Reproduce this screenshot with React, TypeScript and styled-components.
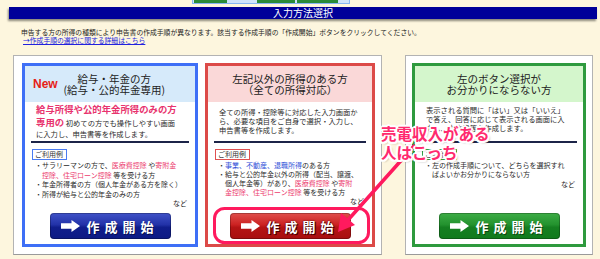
import React from "react";
import styled, { createGlobalStyle, css } from "styled-components";

const Global = createGlobalStyle`
  html, body { margin: 0; padding: 0; }
  body {
    background: #fdf6de;
    font-family: "Noto Sans CJK JP", "Noto Sans", sans-serif;
    color: #262626;
    width: 600px;
    height: 259px;
    overflow: hidden;
  }
`;

const Page = styled.div`
  position: relative;
  width: 600px;
  height: 259px;
`;

const TopStrip = styled.div`
  height: 5px;
`;

const TabBox = styled.div`
  margin-left: 192px;
  width: 154px;
  height: 3px;
  border: 1px solid #86b6f2;
  border-top: none;
  background: #cfe4fb;
  display: flex;
  gap: 2px;
  padding: 0 1px;
`;

const Tab = styled.div<{ $w: number }>`
  width: ${(p) => p.$w}px;
  background: #2a8a38;
`;

const HeaderBar = styled.div`
  margin: 2px 3px 0 9px;
  height: 12px;
  background: #000099;
  color: #fff;
  font-size: 10px;
  line-height: 12px;
  text-align: center;
  box-shadow: -1px 2px 2px rgba(0, 0, 0, 0.45);
`;

const Intro = styled.div`
  margin: 9px 0 0 21px;
  font-size: 6.8px;
  line-height: 8px;
  color: #222;
`;

const IntroLink = styled.a`
  display: block;
  margin-left: 2px;
  color: #2222dd;
  text-decoration: underline;
`;

const Panels = styled.div`
  display: flex;
  gap: 23px;
  margin: 11px 0 0 13px;
`;

const OuterPanel = styled.div<{ $pad: string }>`
  height: 200px;
  box-sizing: border-box;
  background: #fff;
  border: 1px solid #b3b3b3;
  border-bottom-color: #9a9a9a;
  padding: ${(p) => p.$pad};
  display: flex;
  gap: 7px;
`;

type Tone = "blue" | "red" | "green";

const tones = {
  blue: {
    border: "#3e6ff6",
    head: "#d6eafa",
    label: "#4a7cf2",
    btn: "linear-gradient(#4053c8 0%, #2232a8 45%, #101e8c 55%, #0d1a84 100%)",
  },
  red: {
    border: "#dc4a48",
    head: "#fad8d8",
    label: "#e05050",
    btn: "linear-gradient(#e0504c 0%, #cc2222 45%, #b51414 55%, #a80e10 100%)",
  },
  green: {
    border: "#2e9a3e",
    head: "#d4f6cc",
    label: "#33a046",
    btn: "linear-gradient(#3ead46 0%, #23922e 45%, #157f21 55%, #117a1d 100%)",
  },
};

const Card = styled.div<{ $tone: Tone; $w: number }>`
  width: ${(p) => p.$w}px;
  height: 184px;
  box-sizing: border-box;
  border: 3px solid ${(p) => tones[p.$tone].border};
  background: #fff;
  display: flex;
  flex-direction: column;
`;

const CardHead = styled.div<{ $tone: Tone }>`
  height: 36px;
  flex: none;
  background: ${(p) => tones[p.$tone].head};
  display: flex;
  align-items: center;
  padding: 0 8px;
`;

const NewMark = styled.span`
  font-family: "Liberation Sans", Arial, sans-serif;
  font-weight: bold;
  font-size: 12px;
  color: #e62117;
  flex: none;
`;

const Title = styled.div<{ $shift?: number }>`
  flex: 1;
  text-align: center;
  font-size: 10.5px;
  line-height: 11.5px;
  color: #222;
  padding-right: ${(p) => p.$shift ?? 0}px;
`;

const Desc = styled.div<{ $top: number; $lh: number }>`
  height: 38px;
  flex: none;
  box-sizing: border-box;
  padding: ${(p) => p.$top}px 8px 0 11px;
  font-size: 7.3px;
  line-height: ${(p) => p.$lh}px;
  white-space: nowrap;
  color: #2a2a2a;
`;

const PinkBold = styled.span`
  color: #e8336e;
  font-weight: bold;
  font-size: 9.4px;
`;

const Pink = styled.span`
  color: #ec3d6f;
`;

const BlueText = styled.span`
  color: #3150d8;
`;

const Divider = styled.div`
  height: 2px;
  margin: 1px 6px 0;
  background: #1c2448;
  flex: none;
`;

const UsageLabel = styled.div<{ $tone: Tone }>`
  align-self: flex-start;
  margin: 6px 0 0 7px;
  height: 11px;
  box-sizing: border-box;
  border: 1.5px solid ${(p) => tones[p.$tone].label};
  padding: 0 3px 0 2px;
  font-size: 7px;
  line-height: 8px;
  color: #333;
`;

const Bullets = styled.div<{ $lh: number }>`
  margin: 1px 8px 0 10px;
  font-size: 7px;
  line-height: ${(p) => p.$lh}px;
  white-space: nowrap;
  color: #2a2a2a;
`;

const Item = styled.div`
  padding-left: 7px;
  text-indent: -7px;
`;

const Nado = styled.div`
  text-align: right;
`;

const ButtonRow = styled.div`
  margin-top: auto;
  padding-bottom: 5px;
  display: flex;
  justify-content: center;
`;

const StartButton = styled.button<{ $tone: Tone }>`
  width: 121px;
  height: 26px;
  border: none;
  border-radius: 4px;
  padding: 0;
  background: ${(p) => tones[p.$tone].btn};
  box-shadow: inset 0 0 0 1px rgba(0, 0, 0, 0.25);
  display: flex;
  align-items: center;
  justify-content: center;
  gap: 6px;
  color: #fff;
  font-family: "Noto Sans CJK JP", sans-serif;
  font-weight: bold;
  font-size: 13px;
  letter-spacing: 5px;
  text-shadow: 1px 1px 0 rgba(0, 0, 0, 0.45);
  ${(p) =>
    p.$tone === "red" &&
    css`
      text-shadow: 0 0 2px #4a0000, 1px 1px 0 #4a0000;
    `}
`;

const ArrowIcon = () => (
  <svg width="19" height="12" viewBox="0 0 19 12">
    <path d="M0 3.2 H10.5 V0 L19 6 L10.5 12 V8.8 H0 Z" fill="#fff" />
  </svg>
);

const Overlay = styled.svg`
  position: absolute;
  left: 0;
  top: 0;
  pointer-events: none;
`;

const Callout = styled.div`
  position: absolute;
  left: 381px;
  top: 124px;
  font-size: 15.5px;
  line-height: 19px;
  font-weight: bold;
  color: #ff2a6e;
  white-space: nowrap;
  text-shadow: -1.5px -1.5px 0 #fff, 1.5px -1.5px 0 #fff, -1.5px 1.5px 0 #fff,
    1.5px 1.5px 0 #fff, 0 -2px 0 #fff, 0 2px 0 #fff, -2px 0 0 #fff,
    2px 0 0 #fff, 2px 2px 2px rgba(0, 0, 0, 0.3);
`;

const Btn = ({ tone }: { tone: Tone }) => (
  <ButtonRow>
    <StartButton $tone={tone}>
      <ArrowIcon />
      <span>作成開始</span>
    </StartButton>
  </ButtonRow>
);

export default function App() {
  return (
    <Page>
      <Global />
      <TopStrip>
        <TabBox>
          <Tab $w={33} />
          <Tab $w={0} style={{ background: "transparent", width: 26 }} />
          <Tab $w={38} />
          <Tab $w={41} />
        </TabBox>
      </TopStrip>
      <HeaderBar>入力方法選択</HeaderBar>
      <Intro>
        <div>
          申告する方の所得の種類により申告書の作成手順が異なります。該当する作成手順の「作成開始」ボタンをクリックしてください。
        </div>
        <IntroLink>→作成手順の選択に関する詳細はこちら</IntroLink>
      </Intro>
      <Panels>
        <OuterPanel $pad="7px 6px 7px 8px">
          <Card $tone="blue" $w={176}>
            <CardHead $tone="blue">
              <NewMark>New</NewMark>
              <Title $shift={16}>
                給与・年金の方
                <br />
                (給与・公的年金専用)
              </Title>
            </CardHead>
            <Desc $top={2} $lh={11.5}>
              <PinkBold>給与所得や公的年金所得のみの方</PinkBold>
              <br />
              <PinkBold>専用の</PinkBold> 初めての方でも操作しやすい画面
              <br />
              に入力し、申告書等を作成します。
            </Desc>
            <Divider />
            <UsageLabel $tone="blue">ご利用例</UsageLabel>
            <Bullets $lh={9.6}>
              <Item>
                ・サラリーマンの方で、<Pink>医療費控除</Pink> や<Pink>寄附金</Pink>
                <br />
                <Pink>控除、住宅ローン控除</Pink> 等を受ける方
              </Item>
              <Item>・年金所得者の方（個人年金がある方を除く）</Item>
              <Item>・所得が給与と公的年金のみの方</Item>
              <Nado>など</Nado>
            </Bullets>
            <Btn tone="blue" />
          </Card>
          <Card $tone="red" $w={170}>
            <CardHead $tone="red">
              <Title>
                左記以外の所得のある方
                <br />
                （全ての所得対応）
              </Title>
            </CardHead>
            <Desc $top={6} $lh={9}>
              全ての所得・控除等に対応した入力画面か
              <br />
              ら、必要な項目をご自身で選択・入力し、
              <br />
              申告書等を作成します。
            </Desc>
            <Divider />
            <UsageLabel $tone="red">ご利用例</UsageLabel>
            <Bullets $lh={9}>
              <Item>
                ・<BlueText>事業、不動産、退職所得</BlueText>のある方
              </Item>
              <Item>
                ・給与と公的年金以外の所得（配当、譲渡、
                <br />
                個人年金等）があり、<Pink>医療費控除</Pink> や<Pink>寄附</Pink>
                <br />
                <Pink>金控除、住宅ローン控除</Pink> 等を受ける方
              </Item>
              <Nado>など</Nado>
            </Bullets>
            <Btn tone="red" />
          </Card>
        </OuterPanel>
        <OuterPanel $pad="7px 6px 7px 6px">
          <Card $tone="green" $w={174}>
            <CardHead $tone="green">
              <Title>
                左のボタン選択が
                <br />
                お分かりにならない方
              </Title>
            </CardHead>
            <Desc $top={4} $lh={9}>
              表示される質問に「はい」又は「いいえ」
              <br />
              で答え、回答に応じて表示される画面に入
              <br />
              力し、申告書等を作成します。
            </Desc>
            <Divider />
            <UsageLabel $tone="green">ご利用例</UsageLabel>
            <Bullets $lh={9.4}>
              <Item>
                ・左の作成手順について、どちらを選択すれ
                <br />
                ばよいかお分かりにならない方
              </Item>
              <Nado>など</Nado>
            </Bullets>
            <Btn tone="green" />
          </Card>
        </OuterPanel>
      </Panels>
      <Overlay width="600" height="259" viewBox="0 0 600 259">
        <rect
          x="214.5"
          y="208.5"
          width="154"
          height="34"
          rx="10"
          fill="none"
          stroke="#ff1a5e"
          strokeWidth="3"
        />
        <line
          x1="414"
          y1="146"
          x2="348"
          y2="220"
          stroke="#ff1a5e"
          strokeWidth="3.5"
          strokeLinecap="round"
        />
        <path d="M338 232 L341 213 L355 225 Z" fill="#ff1a5e" />
      </Overlay>
      <Callout>
        売電収入がある
        <br />
        人はこっち
      </Callout>
    </Page>
  );
}
